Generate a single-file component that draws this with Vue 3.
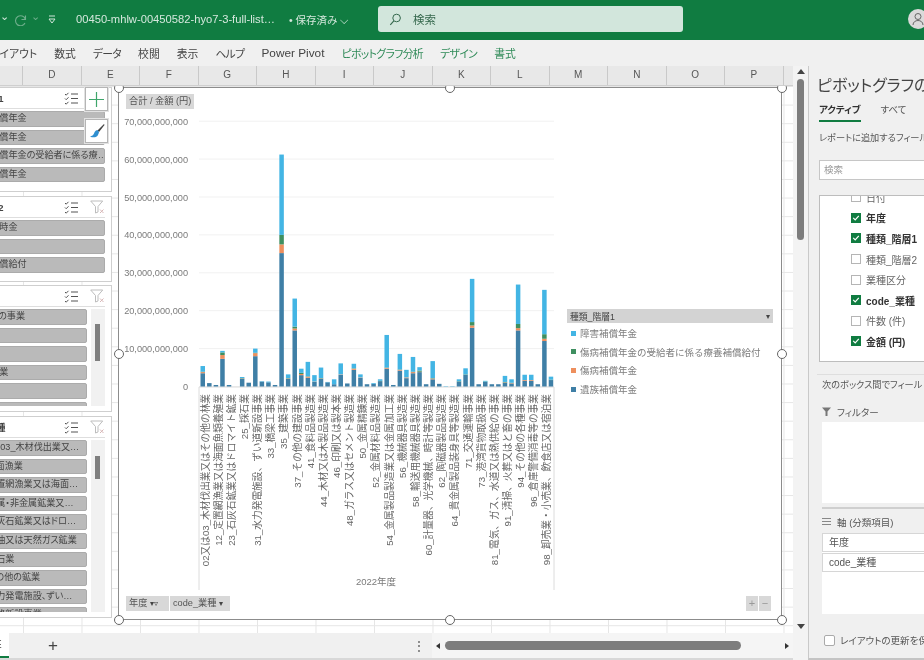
<template>
  <div class="app">
    <header class="titlebar">
      <span class="caret small">⌄</span>
      <svg class="redo" width="14" height="14" viewBox="0 0 14 14"><path d="M11.5 3.5v4h-4M11.3 7.3A5 5 0 1 0 11 11" fill="none" stroke="#6fae8c" stroke-width="1.1"/></svg>
      <span class="caret dim">⌄</span>
      <svg class="custom" width="8" height="9" viewBox="0 0 8 9"><path d="M1 1h6M1 4h6L4 8z" fill="none" stroke="#cfe5d9" stroke-width="1"/></svg>
      <span class="fname">00450-mhlw-00450582-hyo7-3-full-list…</span>
      <span class="saved">• 保存済み ⌵</span>
      <div class="search">
        <svg width="13" height="13" viewBox="0 0 13 13"><circle cx="7.6" cy="5" r="3.8" fill="none" stroke="#35684d" stroke-width="1"/><path d="M4.8 7.8 1.3 11.8" stroke="#35684d" stroke-width="1.1"/></svg>
        <span>検索</span>
      </div>
      <div class="avatar">
        <svg width="12" height="14" viewBox="0 0 12 14"><circle cx="6" cy="4.5" r="3" fill="none" stroke="#666" stroke-width="1"/><path d="M1 13c0-6 10-6 10 0" fill="none" stroke="#666" stroke-width="1"/></svg>
      </div>
    </header>

    <nav class="ribbon">
      <span v-for="t in tabs" :key="t.label" class="tab" :class="t.cls">{{ t.label }}</span>
    </nav>

    <div class="main">
      <div class="workarea">
        <div class="colhead">
          <span v-for="c in columns" :key="c" class="col">{{ c }}</span>
        </div>

        <div class="sheet">
          <!-- slicers float over the cells, cut off by the window's left edge -->
          <section v-for="s in slicers" :key="s.title" class="slicer" :class="s.cls">
            <div class="s-head">
              <span class="s-title">{{ s.title }}</span>
              <svg width="15" height="13" viewBox="0 0 15 13" class="s-ico">
                <path d="M1 2l1.2 1.2L4.5.8M1 6.5l1.2 1.2L4.5 5.3M1 11l1.2 1.2 2.3-2.4" fill="none" stroke="#555" stroke-width="1"/>
                <path d="M7 2h7M7 6.5h7M7 11h7" stroke="#555" stroke-width="1.2"/>
              </svg>
              <svg width="15" height="14" viewBox="0 0 15 14" class="s-ico">
                <path d="M.7 1h12L8 6.5V12L5.5 13V6.5z" fill="none" stroke="#bdbdbd" stroke-width="1"/>
                <path d="M10 9.5l3.5 3.5M13.5 9.5 10 13" stroke="#d8b8b8" stroke-width="1"/>
              </svg>
            </div>
            <div class="s-body">
              <div class="s-items">
                <div v-for="(it, i) in s.items" :key="i" class="s-item">{{ it }}</div>
              </div>
              <div v-if="s.scroll" class="s-track"><div class="s-thumb"></div></div>
            </div>
          </section>

          <button class="float-btn plus" type="button">
            <svg width="15" height="15" viewBox="0 0 15 15"><path d="M7.5 0v15M0 7.5h15" stroke="#3fa66b" stroke-width="1.2"/></svg>
          </button>
          <button class="float-btn brush" type="button">
            <svg width="16" height="16" viewBox="0 0 16 16">
              <path d="M15 1 8.5 7.5l1.5 1.5L15.500 2z" fill="#444"/>
              <path d="M8.500 7C6 7.500 5.500 9 5 10.500 4.500 12 3 13 1 13.500c3 1.500 7 1 8-1.500.5-1.300.8-2 1-3z" fill="#2f8fd0"/>
            </svg>
          </button>

          <div class="chart">
            <svg class="plot" width="662" height="531" viewBox="119 88 662 531">
              <line v-for="g in gridY" :key="g.label" x1="199" x2="554" :y1="g.y" :y2="g.y" stroke="#f1f1f1"/>
              <text v-for="g in gridY" :key="'t' + g.label" x="188" :y="g.y + 3.500" class="ylab">{{ g.label }}</text>
              <path d="M199 387H554M199 387V590M554 387V590" fill="none" stroke="#dcdcdc"/>
              <g v-for="(seg, i) in barRects" :key="i">
                <rect v-for="r in seg" :key="r.fill" :x="r.x" :y="r.y" width="4.500" :height="r.h" :fill="r.fill"/>
              </g>
              <text
                v-for="(l, i) in catLabels"
                :key="l"
                class="xlab"
                :transform="`translate(${208.500 + i * 13.150},394) rotate(-90)`"
              >{{ l }}</text>
              <text x="376" y="585" class="year">2022年度</text>
            </svg>

            <span class="fbtn sum">合計 / 金額 (円)</span>
            <div class="axis-btns">
              <span class="fbtn yr">年度 <i class="mark">▾▿</i></span>
              <span class="fbtn cd">code_業種 <i class="mark">▾</i></span>
            </div>
            <div class="zoom-btns">
              <span class="zbtn">+</span>
              <span class="zbtn">−</span>
            </div>

            <div class="legend">
              <div class="lg-head"><span>種類_階層1</span><i class="mark">▾</i></div>
              <div v-for="l in legend" :key="l.label" class="lg-row">
                <span class="swatch" :style="{ background: l.color }"></span>{{ l.label }}
              </div>
            </div>

            <span v-for="h in handles" :key="h" class="handle" :class="h"></span>
          </div>
        </div>

        <footer class="sheetbar">
          <div class="sheettab">E</div>
          <span class="addsheet">+</span>
          <span class="dots">⋮</span>
          <div class="hscroll">
            <i class="arr-l"></i>
            <div class="h-thumb"></div>
            <i class="arr-r"></i>
          </div>
        </footer>
      </div>

      <div class="vscroll">
        <i class="arr-u"></i>
        <div class="v-thumb"></div>
        <i class="arr-d"></i>
      </div>

      <aside class="pane">
        <h2 class="p-title">ピボットグラフのフィールド</h2>
        <div class="p-tabs">
          <span class="p-tab on">アクティブ</span>
          <span class="p-tab">すべて</span>
        </div>
        <p class="p-note first">レポートに追加するフィールドを選択してください:</p>
        <div class="p-search">検索</div>
        <div class="p-fields">
          <div class="p-fields-in">
            <label v-for="f in fields" :key="f.name" class="p-field" :class="{ on: f.on }">
              <span class="cb">
                <svg v-if="f.on" width="10" height="10" viewBox="0 0 10 10"><path d="M2.200 4.800 4.200 6.800 7.800 2.800" fill="none" stroke="#fff" stroke-width="1.200"/></svg>
              </span>
              {{ f.name }}
            </label>
          </div>
        </div>
        <div class="p-rule"></div>
        <p class="p-note">次のボックス間でフィールドをドラッグしてください:</p>
        <div class="p-label filter-label">
          <svg width="9" height="9" viewBox="0 0 9 9"><path d="M0 .5h9L5.500 4.500V9h-2V4.500z" fill="#777"/></svg>
          フィルター
        </div>
        <div class="p-zone filter-zone"></div>
        <div class="p-band"></div>
        <div class="p-label axis-label">
          <svg width="9" height="7" viewBox="0 0 9 7"><path d="M0 .5h9M0 3.500h9M0 6.500h9" stroke="#888"/></svg>
          軸 (分類項目)
        </div>
        <div class="p-zone axis-zone">
          <div class="p-chip">年度</div>
          <div class="p-chip">code_業種</div>
        </div>
        <label class="p-defer"><span class="cb big"></span>レイアウトの更新を保留する</label>
      </aside>
    </div>
  </div>
</template>

<script setup>
import { computed } from 'vue'

const tabs = [
  { label: 'レイアウト' }, { label: '数式' }, { label: 'データ', cls: 'kana' }, { label: '校閲' },
  { label: '表示' }, { label: 'ヘルプ', cls: 'kana' }, { label: 'Power Pivot', cls: 'pp' },
  { label: 'ピボットグラフ分析', cls: 'ctx kana' }, { label: 'デザイン', cls: 'ctx kana' }, { label: '書式', cls: 'ctx' }
]
const columns = ['C', 'D', 'E', 'F', 'G', 'H', 'I', 'J', 'K', 'L', 'M', 'N', 'O', 'P']

const slicers = [
  { cls: 's1', title: '種類_階層1', items: ['障害補償年金', '傷病補償年金', '傷病補償年金の受給者に係る療…', '遺族補償年金'] },
  { cls: 's2', title: '種類_階層2', items: ['障害一時金', '葬祭料', '療養補償給付'] },
  { cls: 's3', title: '業種区分', scroll: true, items: ['その他の事業', '漁業', '鉱業', '建設事業', '製造業', '運輸業'] },
  {
    cls: 's4', title: 'code_業種', scroll: true,
    items: ['02又は03_木材伐出業又…', '11_海面漁業', '12_定置網漁業又は海面…', '21_金属・非金属鉱業又…',
      '23_石灰石鉱業又はドロ…', '24_原油又は天然ガス鉱業', '25_採石業', '26_その他の鉱業',
      '31_水力発電施設、ずい…', '32_道路新設事業']
  }
]

// [遺族, 傷病, 傷病療養, 障害までの累計] in 10億円
const bars = [
  [3.5, 3.8, 3.9, 5.4], [.9, .9, .9, .9], [.4, .4, .4, .4], [7.3, 8.3, 9, 9.4], [.4, .4, .4, .4], [0, 0, 0, 0],
  [2, 2.1, 2.2, 2.5], [1, 1, 1, 1], [8, 8.8, 8.9, 10], [1.3, 1.3, 1.3, 1.4], [1.1, 1.1, 1.1, 1.3], [.4, .4, .4, .4],
  [35.2, 37.5, 40, 61.2], [2, 2.1, 2.2, 3.2], [14.8, 15.3, 15.8, 23.2], [3, 3.3, 3.6, 4.7], [2.3, 2.6, 2.7, 6.5],
  [1.2, 1.3, 1.3, 3], [2, 2.1, 2.2, 5], [1.1, 1.1, 1.1, 1.2], [.6, .6, .6, 1.9], [3.1, 3.2, 3.2, 6.1], [.8, .8, .8, .8],
  [4.4, 4.7, 4.8, 6], [2.3, 2.4, 2.4, 3.2], [.6, .6, .6, .6], [.7, .7, .7, .9], [1.4, 1.4, 1.5, 1.9], [4.7, 4.9, 5, 13.6],
  [.4, .4, .4, .4], [4.2, 4.4, 4.5, 8.6], [2.2, 2.4, 2.4, 4.4], [3.5, 3.8, 3.9, 7.8], [3.8, 3.9, 4.2, 5.100],
  [.6, .6, .6, .6], [1.9, 2.1, 2.2, 6.7], [.7, .7, .7, .7], [0, 0, 0, .1], [0, 0, 0, .1], [1.3, 1.3, 1.4, 1.9],
  [3.1, 3.1, 3.2, 4.8], [15.5, 16.1, 17, 28.4], [.6, .6, .6, .6], [1.2, 1.2, 1.3, 1.5], [.6, .6, .6, .6], [.6, .6, .6, .6],
  [1, 1.1, 1.2, 2.8], [.8, .9, 1, 1.9], [14.8, 15.4, 16.5, 26.9], [1.5, 1.7, 1.7, 3.1], [1.5, 1.7, 1.7, 3.1],
  [.6, .6, .6, .6], [12, 12.6, 13.8, 25.5], [1.7, 1.7, 1.8, 2.6]
]
const colors = ['#3f7fa6', '#ee8f5d', '#3f8f60', '#43b5e4']
const BASE = 386.500
const PER = 3.790 // px per 1,000,000,000

const barRects = computed(() => bars.map((b, i) => {
  let prev = 0
  const out = []
  b.forEach((top, k) => {
    if (top > prev) {
      out.push({ x: 200.500 + i * 6.570, y: BASE - top * PER, h: (top - prev) * PER, fill: colors[k] })
      prev = top
    }
  })
  return out
}))

const gridY = [70, 60, 50, 40, 30, 20, 10, 0].map(v => ({
  label: v ? `${v},000,000,000` : '0',
  y: BASE - v * PER
}))

const catLabels = [
  '02又は03_木材伐出業又はその他の林業', '12_定置網漁業又は海面魚類養殖業', '23_石灰石鉱業又はドロマイト鉱業', '25_採石業',
  '31_水力発電施設、ずい道新設事業', '33_橋梁工事業', '35_建築事業', '37_その他の建設事業', '41_食料品製造業',
  '44_木材又は木製品製造業', '46_印刷又は製本業', '48_ガラス又はセメント製造業', '50_金属精錬業', '52_金属材料品製造業',
  '54_金属製品製造業又は金属加工業', '56_機械器具製造業', '58_輸送用機械器具製造業', '60_計量器、光学機械、時計等製造業',
  '62_陶磁器製品製造業', '64_貴金属製品装身具等製造業', '71_交通運輸事業', '73_港湾貨物取扱事業',
  '81_電気、ガス、水道又は熱供給の事業', '91_清掃、火葬又はと畜の事業', '94_その他の各種事業', '96_倉庫警備消毒等の事業',
  '98_卸売業・小売業、飲食店又は宿泊業'
]

const legend = [
  { label: '障害補償年金', color: '#43b5e4' },
  { label: '傷病補償年金の受給者に係る療養補償給付', color: '#3f8f60' },
  { label: '傷病補償年金', color: '#ee8f5d' },
  { label: '遺族補償年金', color: '#3f7fa6' }
]

const handles = ['tl', 'tc', 'tr', 'ml', 'mr', 'bl', 'bc', 'br']

const fields = [
  { name: '日付', on: false }, { name: '年度', on: true }, { name: '種類_階層1', on: true },
  { name: '種類_階層2', on: false }, { name: '業種区分', on: false }, { name: 'code_業種', on: true },
  { name: '件数 (件)', on: false }, { name: '金額 (円)', on: true }
]
</script>

<style>
html, body { margin: 0; overflow: hidden; }
</style>

<style scoped>
.app {
  width: 924px; height: 660px; overflow: hidden;
  display: flex; flex-direction: column;
  background: #f0f0f0; color: #444;
  font-family: "Liberation Sans", "Noto Sans CJK JP", sans-serif;
  font-feature-settings: "palt";
  filter: blur(0.6px);
}

/* title bar */
.titlebar {
  height: 40px; flex: none; position: relative;
  display: flex; align-items: center;
  background: #107c41; color: #d5e8dd; font-size: 10.5px;
  box-sizing: border-box; padding-bottom: 2px;
}
.caret { width: 8px; line-height: 1; margin-top: -6px; font-size: 11px; color: #d5e8dd; }
.caret.dim { color: #6fae8c; margin-left: 3px; }
.redo { margin-left: 6px; }
.custom { margin-left: 9px; }
.fname { margin-left: 20px; width: 202px; white-space: nowrap; font-size: 11.200px; }
.saved { margin-left: 11px; width: 89px; white-space: nowrap; }
.search {
  width: 305px; height: 26px; box-sizing: border-box; padding-left: 11px;
  display: flex; align-items: center; gap: 11px;
  background: #d2e6dc; border-radius: 3px; color: #35684d; font-size: 11.500px;
}
.avatar {
  width: 20px; height: 20px; margin-left: auto; margin-right: -4px; border-radius: 50%;
  background: #dadada; display: flex; align-items: center; justify-content: center;
}

/* ribbon tabs */
.ribbon {
  height: 26px; flex: none; box-sizing: border-box;
  display: flex; align-items: center; gap: 17px; margin-left: -10px;
  background: #f0f0f0; font-size: 10.800px; white-space: nowrap; color: #444;
}
.tab.kana { letter-spacing: -.6px; }
.tab.pp { font-size: 11.800px; }
.tab.ctx { color: #2f8a58; }

.main { flex: 1; display: flex; min-height: 0; }
.workarea { width: 793px; flex: none; display: flex; flex-direction: column; }

/* column header */
.colhead {
  height: 20px; flex: none; display: flex; margin-left: -35.500px;
  background: #e8e8e8; border-bottom: 1px solid #cfcfcf; box-sizing: border-box;
}
.col {
  width: 58.500px; flex: none; box-sizing: border-box; text-align: center;
  border-right: 1px solid #c9c9c9; font-size: 10px; line-height: 18px; color: #555;
  font-family: "Liberation Sans", sans-serif;
}

/* sheet */
.sheet {
  flex: 1; position: relative; overflow: hidden; background-color: #fff;
  background-image:
    linear-gradient(to right, #e6e6e6 1px, transparent 1px),
    linear-gradient(to bottom, #e6e6e6 1px, transparent 1px);
  background-size: 58.500px 18.600px;
  background-position: 23px 0;
}

/* slicers */
.slicer {
  position: absolute; left: -42px; width: 154px; box-sizing: border-box;
  background: #fff; border: 1px solid #cfcfcf; display: flex; flex-direction: column;
}
.s1 { top: 1px; height: 105px; }
.s2 { top: 110px; height: 86px; }
.s3 { top: 199px; height: 127px; }
.s4 { top: 330px; height: 202px; }
.s-head {
  height: 21px; flex: none; display: flex; align-items: center; box-sizing: border-box;
  margin: 0 6px 2px 0; border-bottom: 1px solid #dedede; font-size: 9.500px; font-weight: 700; color: #444;
}
.s-title { flex: 1; margin-left: -4px; white-space: nowrap; }
.s4 .s-title { margin-left: 0; }
.s-ico { margin-left: 11px; flex: none; }
.s-body { flex: 1; min-height: 0; display: flex; padding: 0 6px 5px 3px; }
.s-items { flex: 1; min-width: 0; display: flex; flex-direction: column; gap: 3px; overflow: hidden; }
.s-item {
  height: 15.600px; flex: none; box-sizing: border-box; padding-left: 9px;
  background: #bababa; border: 1px solid #ababab; border-radius: 2px;
  font-size: 9.100px; line-height: 13.500px; color: #444; white-space: nowrap; overflow: hidden;
}
.s-track { width: 14px; flex: none; margin-left: 4px; background: #f1f1f1; }
.s-thumb { width: 5px; margin-left: 4px; background: #7f7f7f; }
.s3 .s-thumb { margin-top: 15px; height: 37px; }
.s4 .s-thumb { margin-top: 16px; height: 23px; }

.float-btn {
  position: absolute; left: 85px; width: 23px; height: 24px; padding: 0;
  display: flex; align-items: center; justify-content: center;
  background: #fff; border: 1px solid #b5b5b5; box-shadow: 0 0 0 1px #e2e2e2;
}
.plus { top: 1px; }
.brush { top: 33px; }

/* chart */
.chart {
  position: absolute; left: 118px; top: 1px; width: 664px; height: 533px; box-sizing: border-box;
  background: #fff; border: 1.500px solid #8c8c8c;
}
.plot { position: absolute; left: 0; top: 0; display: block; }
.ylab { font-size: 9.200px; fill: #7b7b7b; text-anchor: end; }
.xlab { font-size: 9.700px; fill: #666; text-anchor: end; font-feature-settings: normal; }
.year { font-size: 9.500px; fill: #7b7b7b; text-anchor: middle; }
.fbtn {
  background: #d8d8d8; color: #555; font-size: 9.200px; line-height: 15px; height: 15px;
  padding: 0 3px; white-space: nowrap; display: inline-block; box-sizing: border-box;
}
.sum { position: absolute; left: 7px; top: 6px; }
.fbtn.yr { width: 43px; }
.fbtn.cd { width: 60px; }
.mark { font-style: normal; font-size: 8px; color: #444; }
.axis-btns { position: absolute; left: 7px; top: 508px; display: flex; gap: 1px; }
.zoom-btns { position: absolute; left: 627px; top: 508px; display: flex; gap: 1px; }
.zbtn { width: 12px; height: 15px; background: #d8d8d8; color: #999; font-size: 11px; line-height: 14px; text-align: center; }

.legend {
  position: absolute; left: 448px; top: 221px; width: 206px;
  font-size: 9.500px; color: #7d7d7d; font-feature-settings: normal;
}
.lg-head {
  height: 14px; display: flex; align-items: center; justify-content: space-between;
  padding: 0 3px; background: #d3d3d3; color: #444; font-size: 8.800px; margin-bottom: 1px;
}
.lg-row { height: 18.600px; display: flex; align-items: center; white-space: nowrap; padding-left: 4px; }
.swatch { width: 5px; height: 5px; margin-right: 4px; flex: none; }

.handle {
  position: absolute; width: 10px; height: 10px; box-sizing: border-box;
  border: 1.800px solid #666; border-radius: 50%; background: #fff;
}
.tl, .ml, .bl { left: -5.500px; }
.tc, .bc { left: 326px; }
.tr, .mr, .br { right: -5.500px; }
.tl, .tc, .tr { top: -5.500px; }
.ml, .mr { top: 261px; }
.bl, .bc, .br { bottom: -5.500px; }

/* sheet tabs */
.sheetbar {
  height: 27px; flex: none; position: relative; display: flex; align-items: center;
  background: #f0f0f0; border-bottom: 2px solid #d8d8d8; box-sizing: border-box;
}
.sheettab {
  width: 9px; height: 100%; background: #fff; color: #444; font-size: 10px; line-height: 24px;
  text-indent: -5px; overflow: hidden; box-sizing: border-box; border-bottom: 2px solid #107c41;
}
.addsheet { margin-left: 38px; width: 12px; font-size: 17px; line-height: 1; color: #444; text-align: center; }
.dots { margin-left: 354px; width: 8px; font-size: 12px; color: #555; text-align: center; }
.hscroll {
  width: 361px; height: 100%; margin-left: 11px; box-sizing: border-box; padding-left: 4px;
  background: #f5f5f5; display: flex; align-items: center;
}
.arr-l { border: 3.500px solid transparent; border-right: 4px solid #333; border-left: 0; }
.h-thumb { width: 296px; height: 9px; margin-left: 5px; border-radius: 5px; background: #7d7d7d; }
.arr-r { margin-left: 44px; border: 3.500px solid transparent; border-left: 4px solid #333; border-right: 0; }

/* vertical scroll */
.vscroll {
  width: 15px; flex: none; position: relative; background: #f3f3f3; box-sizing: border-box; padding-top: 13px;
  display: flex; flex-direction: column; align-items: center;
}
.arr-u { position: absolute; top: 3px; left: 3.500px; border: 4px solid transparent; border-bottom: 5px solid #444; border-top: 0; }
.v-thumb { width: 7px; height: 161px; border-radius: 4px; background: #7d7d7d; }
.arr-d { position: absolute; top: 558px; left: 3.500px; border: 4px solid transparent; border-top: 5px solid #444; border-bottom: 0; }

/* field pane */
.pane {
  width: 116px; flex: none; box-sizing: border-box; overflow: hidden; white-space: nowrap;
  background: #f0f0f0; border-left: 1px solid #c9c9c9; border-bottom: 2px solid #c4c4c4;
  padding-left: 8px; font-size: 9.500px; color: #555;
}
.p-title { margin: 9px 0 0; font-size: 16px; font-weight: 400; line-height: 22px; color: #444; }
.p-tabs { display: flex; gap: 20px; margin-top: 5px; margin-left: 2px; font-size: 9.500px; }
.p-tab { height: 20px; line-height: 16px; box-sizing: border-box; }
.p-tab.on { font-weight: 700; color: #333; border-bottom: 2px solid #107c41; }
.p-note { margin: 0; font-size: 9.200px; line-height: 14px; }
.p-note.first { margin-top: 9px; margin-left: 2px; }
.p-search {
  margin: 15px 0 0 2px; width: 200px; height: 20px; box-sizing: border-box; padding-left: 4px;
  background: #fff; border: 1px solid #c6c6c6; line-height: 18px; color: #999;
}
.p-fields {
  margin: 15px 0 0 2px; width: 200px; height: 167px; box-sizing: border-box; overflow: hidden;
  background: #fff; border: 1px solid #bdbdbd;
}
.p-fields-in { margin-top: -9px; padding-left: 31px; }
.p-field { display: flex; align-items: center; height: 20.600px; color: #666; font-size: 10px; }
.p-field.on { font-weight: 700; color: #333; }
.cb {
  width: 10px; height: 10px; margin-right: 5px; flex: none; box-sizing: border-box; border: 1px solid #b5b5b5;
  display: inline-block; background: #fff;
}
.p-field.on .cb { background: #107c41; border-color: #107c41; }
.cb svg { display: block; margin: -1px; }
.p-rule { margin-top: 12px; width: 200px; border-top: 1px solid #dedede; }
.p-note:not(.first) { margin-top: 3px; margin-left: 5px; }
.p-label { display: flex; align-items: center; gap: 6px; margin: 13px 0 0 5px; height: 13px; font-size: 9.500px; }
.axis-label { margin-top: 6px; }
.p-zone { margin-left: 5px; width: 200px; background: #fff; box-sizing: border-box; }
.filter-zone { margin-top: 4px; height: 81px; }
.p-band { margin: 4px 0 0 5px; width: 200px; height: 2px; background: #cfcfcf; }
.axis-zone { margin-top: 5px; height: 81px; }
.p-chip {
  height: 19px; margin-bottom: 1px; box-sizing: border-box; padding-left: 6px; width: 100%;
  background: #fff; border: 1px solid #d6d6d6; line-height: 17px; font-size: 10px; color: #555;
}
.p-defer { display: flex; align-items: center; margin: 19px 0 0 7px; font-size: 9.500px; }
.cb.big { width: 11px; height: 11px; border-color: #aaa; border-radius: 2px; margin-right: 5px; }
</style>
